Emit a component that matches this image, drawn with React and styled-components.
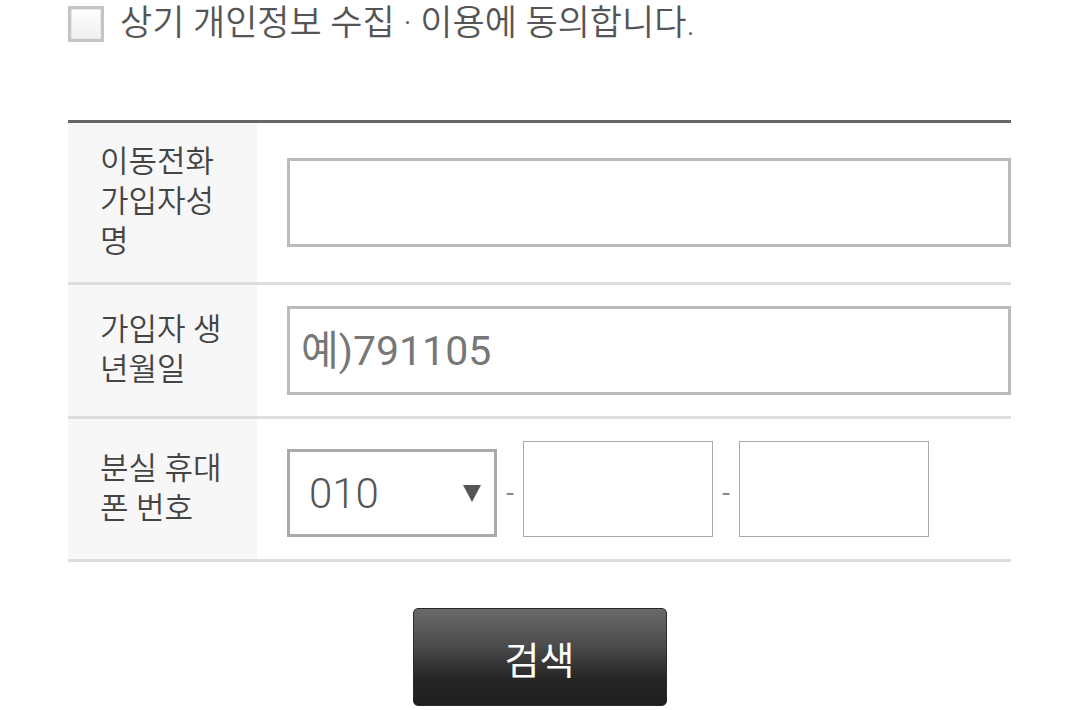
import React from "react";
import styled, { createGlobalStyle } from "styled-components";

const GlobalStyle = createGlobalStyle`
  html, body {
    margin: 0;
    padding: 0;
    background: #fff;
  }
  body {
    font-family: Roboto, "Noto Sans CJK KR", sans-serif;
    color: #444;
  }
  * {
    box-sizing: border-box;
  }
`;

const FIELDS = [
  { id: "name", label: "이동전화 가입자성명", placeholder: "" },
  { id: "birth", label: "가입자 생년월일", placeholder: "예)791105" },
];

const App = () => {
  return (
    <>
      <GlobalStyle />
      <Page>
        <Agree>
          <Check type="checkbox" id="agree" />
          <AgreeText htmlFor="agree">상기 개인정보 수집 · 이용에 동의합니다.</AgreeText>
        </Agree>

        <Table>
          {FIELDS.map((f) => (
            <Row key={f.id}>
              <Label>{f.label}</Label>
              <Cell>
                <TextInput type="text" placeholder={f.placeholder} />
              </Cell>
            </Row>
          ))}
          <Row>
            <Label>분실 휴대폰 번호</Label>
            <Cell>
              <PhoneGroup>
                <SelectWrap>
                  <Select defaultValue="010">
                    <option>010</option>
                    <option>011</option>
                    <option>016</option>
                    <option>017</option>
                    <option>018</option>
                    <option>019</option>
                  </Select>
                  <Arrow viewBox="0 0 18 17">
                    <path d="M0 0H18L9 17Z" fill="#555" />
                  </Arrow>
                </SelectWrap>
                <Dash>-</Dash>
                <PhoneInput type="tel" />
                <Dash>-</Dash>
                <PhoneInput type="tel" />
              </PhoneGroup>
            </Cell>
          </Row>
        </Table>

        <Actions>
          <SearchButton type="button">검색</SearchButton>
        </Actions>
      </Page>
    </>
  );
};

export default App;

const Page = styled.main`
  padding: 6px 69px 0 68px;
`;

const Agree = styled.div`
  display: flex;
  align-items: center;
  gap: 16px;
  height: 36px;
`;

const Check = styled.input`
  appearance: none;
  flex: none;
  margin: 0;
  width: 36px;
  height: 36px;
  border: 3px solid #c4c4c4;
  background: linear-gradient(#fdfdfd, #f0f0f0);
  box-shadow: inset 0 0 0 1px #e8e8e8;
`;

const AgreeText = styled.label`
  font-size: 35px;
  font-weight: 350;
  color: #555;
  line-height: 36px;
`;

const Table = styled.section`
  margin-top: 78px;
  border-top: 3px solid #666;
`;

const Row = styled.div`
  display: grid;
  grid-template-columns: 189px 1fr;
  border-bottom: 3px solid #ddd;
`;

const Label = styled.div`
  display: flex;
  align-items: center;
  padding: 19px 20px 20px 32px;
  background: #f7f7f7;
  font-size: 31px;
  font-weight: 350;
  line-height: 40px;
  color: #444;
`;

const Cell = styled.div`
  display: flex;
  align-items: center;
  padding: 21px 0 21px 30px;
`;

const TextInput = styled.input`
  width: 100%;
  height: 89px;
  margin: 0;
  padding: 0 11px;
  border: 3px solid #bbb;
  border-radius: 0;
  outline: none;
  font-family: Roboto, "Noto Sans CJK KR", sans-serif;
  font-size: 41px;
  color: #555;

  &::placeholder {
    color: #777;
  }
`;

const PhoneGroup = styled.div`
  display: flex;
  align-items: flex-end;
  padding: 1px 0;
`;

const SelectWrap = styled.div`
  position: relative;
  flex: none;
  width: 210px;
  height: 88px;
`;

const Select = styled.select`
  appearance: none;
  width: 100%;
  height: 100%;
  margin: 0;
  padding: 0 0 0 19px;
  border: 3px solid #aaa;
  border-radius: 0;
  background: #fff;
  outline: none;
  font-family: Roboto, "Noto Sans CJK KR", sans-serif;
  font-size: 42px;
  font-weight: 300;
  color: #555;
`;

const Arrow = styled.svg`
  position: absolute;
  right: 16px;
  top: 36px;
  width: 18px;
  height: 17px;
  pointer-events: none;
`;

const Dash = styled.span`
  flex: none;
  align-self: center;
  width: 26px;
  padding-top: 6px;
  text-align: center;
  font-size: 28px;
  color: #888;
`;

const PhoneInput = styled.input`
  flex: none;
  width: 190px;
  height: 96px;
  margin: 0;
  border: 1px solid #aaa;
  border-radius: 0;
  outline: none;
  font-family: Roboto, sans-serif;
  font-size: 40px;
  color: #555;
`;

const Actions = styled.div`
  display: flex;
  justify-content: center;
  margin-top: 46px;
`;

const SearchButton = styled.button`
  width: 254px;
  height: 98px;
  border: 1px solid #2a2a2a;
  border-radius: 5px;
  background: linear-gradient(
    to bottom,
    #6a6a6a 0%,
    #4a4a4a 40%,
    #262626 72%,
    #1f1f1f 100%
  );
  color: #fff;
  font-family: "Noto Sans CJK KR", sans-serif;
  font-size: 38px;
  font-weight: 400;
  cursor: pointer;
`;
